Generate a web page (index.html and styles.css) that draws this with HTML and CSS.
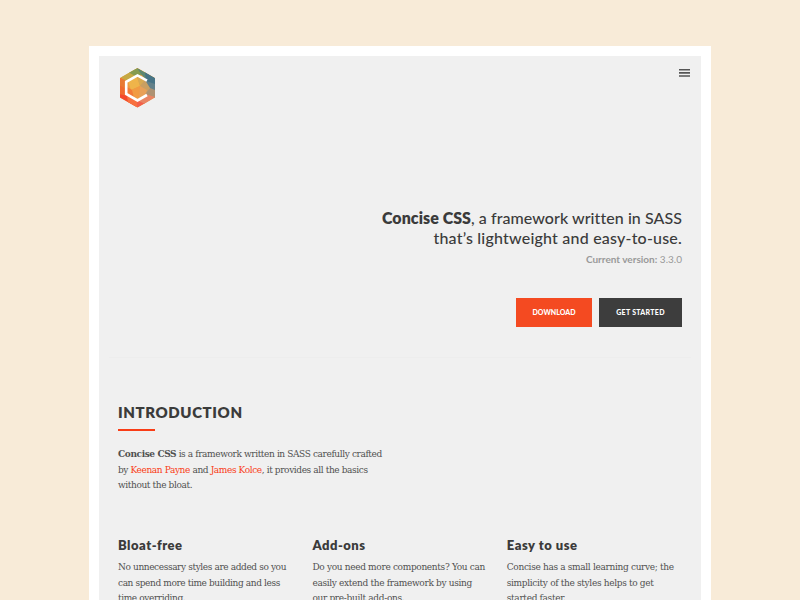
FILE: index.html
```
<!DOCTYPE html>
<html lang="en">
<head>
<meta charset="utf-8">
<title>Concise CSS</title>
<link rel="stylesheet" href="styles.css">
</head>
<body>
<div class="page">
  <header class="header">
    <svg class="logo" width="36" height="40" viewBox="0 0 36 40">
      <defs>
        <clipPath id="hex"><path d="M18.5 0 36 10V29.5L18.5 39.5 1 29.5V10Z"/></clipPath>
      </defs>
      <g clip-path="url(#hex)">
        <path fill="#ed9b45" d="M0 0H36V40H0Z"/>
        <path fill="#c5a943" d="M0 8 18 0 15 10 7 13Z"/>
        <path fill="#859b50" d="M9 4 18 0 27 5 18 9Z"/>
        <path fill="#5f8871" d="M18 0 36 10 28 13 22 6Z"/>
        <path fill="#477486" d="M26 4 36 10V20L27 15Z"/>
        <path fill="#63818a" d="M27 13 36 16V24L27 20Z"/>
        <path fill="#ae9272" d="M26 18 36 22V30L26 27Z"/>
        <path fill="#e87a34" d="M0 9 8 13 6 22 0 18Z"/>
        <path fill="#f06a2f" d="M0 17 7 21 8 29 0 28Z"/>
        <path fill="#f4482c" d="M0 26 9 28 18 40 0 30Z"/>
        <path fill="#f8703e" d="M8 28 18 32 18 40 9 35Z"/>
        <path fill="#f2604a" d="M18 32 27 35 18 40Z"/>
        <path fill="#e98463" d="M18 32 26 26 36 29 26 36Z"/>
        <path fill="#efb44a" d="M9 13 18 9 21 18 12 22Z"/>
        <path fill="#d7aa52" d="M18 9 27 13 21 18Z"/>
        <path fill="#c99f62" d="M26 12 31 20 27 25 21 18Z"/>
        <path fill="#f19b42" d="M12 22 21 18 20 30 10 27Z"/>
        <path fill="#e8a058" d="M21 18 28 22 26 28 20 30Z"/>
        <path fill="#f27a38" d="M8 19 13 22 15 30 8 26Z"/>
      </g>
      <path fill="none" stroke="#fff" stroke-width="2.6" d="M28 12.6 18.5 7.4 7.2 13.8V26L18.5 32.4 28 27"/>
    </svg>
    <svg class="menu" width="11" height="8" viewBox="0 0 11 8">
      <path fill="#555" d="M0 0H11V1.6H0ZM0 3.1H11V4.7H0ZM0 6.2H11V7.8H0Z"/>
    </svg>
  </header>
  <section class="hero">
    <h1 class="tagline"><span class="line first"><b>Concise CSS</b>, a framework written in SASS</span><span class="line second">that’s lightweight and easy-to-use.</span></h1>
    <p class="version"><b>Current version:</b> 3.3.0</p>
    <div class="actions">
      <a class="button download">DOWNLOAD</a>
      <a class="button start">GET STARTED</a>
    </div>
  </section>
  <section class="intro">
    <h2 class="title">INTRODUCTION</h2>
    <p class="copy"><b>Concise CSS</b> is a framework written in SASS carefully crafted<br>by <a class="link">Keenan Payne</a> and <a class="link">James Kolce</a>, it provides all the basics<br>without the bloat.</p>
  </section>
  <section class="features">
    <article>
      <h3 class="name">Bloat-free</h3>
      <p class="copy">No unnecessary styles are added so you<br>can spend more time building and less<br>time overriding.</p>
    </article>
    <article>
      <h3 class="name">Add-ons</h3>
      <p class="copy loose">Do you need more components? You can<br>easily extend the framework by using<br>our pre-built add-ons.</p>
    </article>
    <article>
      <h3 class="name">Easy to use</h3>
      <p class="copy loose">Concise has a small learning curve; the<br>simplicity of the styles helps to get<br>started faster.</p>
    </article>
  </section>
</div>
</body>
</html>
```
FILE: styles.css
```
* { box-sizing: border-box; }
body {
  margin: 0;
  height: 600px;
  overflow: hidden;
  padding: 46px 89px 0;
  background: #f8ebd8;
  color: #3b3b3b;
  font-family: Lato, sans-serif;
}
h1, h2, h3, p { margin: 0; }
.page {
  height: 554px;
  overflow: hidden;
  border: 10px solid #fff;
  border-bottom: 0;
  background: #f0f0f0;
}
.header {
  display: flex;
  justify-content: space-between;
  align-items: flex-start;
  height: 152px;
  padding: 12px 11px 0 20px;
}
.logo, .menu { display: block; }
.menu { margin-top: 1px; }
.hero {
  display: flex;
  flex-direction: column;
  align-items: flex-end;
  height: 150px;
  margin: 0 10px;
  padding-right: 9px;
  border-bottom: 1px solid #ededed;
}
.tagline {
  font-size: 16px;
  font-weight: 500;
  line-height: 20px;
  text-align: right;
  white-space: nowrap;
}
.tagline b { font-weight: 800; }
.line { display: block; }
.first { letter-spacing: 0.06px; }
.second { letter-spacing: 0.2px; }
.version {
  margin-top: 4px;
  font-size: 10px;
  line-height: 14px;
  color: #999;
}
.actions {
  display: flex;
  gap: 7px;
  margin-top: 32px;
}
.button {
  width: 76px;
  height: 29px;
  color: #fff;
  font-size: 7px;
  font-weight: 900;
  line-height: 29px;
  letter-spacing: 0.3px;
  text-align: center;
}
.download { background: #f44a21; letter-spacing: 0; }
.start { width: 83px; background: #3d3d3d; }
.intro {
  height: 123px;
  margin-top: 44px;
  padding-left: 19px;
}
.title {
  margin-bottom: 15px;
  font-size: 15px;
  font-weight: 800;
  line-height: 20px;
  letter-spacing: 0.6px;
}
.title::after {
  display: block;
  width: 37px;
  height: 2px;
  margin-top: 7px;
  background: #f93d17;
  content: "";
}
.copy {
  font-family: "DejaVu Serif Condensed", "DejaVu Serif", serif;
  font-stretch: condensed;
  font-size: 10px;
  line-height: 15.6px;
  letter-spacing: -0.39px;
  color: #505050;
  white-space: nowrap;
}
.loose { letter-spacing: -0.33px; }
.link { color: #f93d17; }
.features {
  display: grid;
  grid-template-columns: repeat(3, 194.4px);
  padding: 12px 0 0 19px;
}
.name {
  margin-bottom: 5px;
  font-size: 13px;
  font-weight: 800;
  line-height: 17px;
  letter-spacing: 0.5px;
}
```
